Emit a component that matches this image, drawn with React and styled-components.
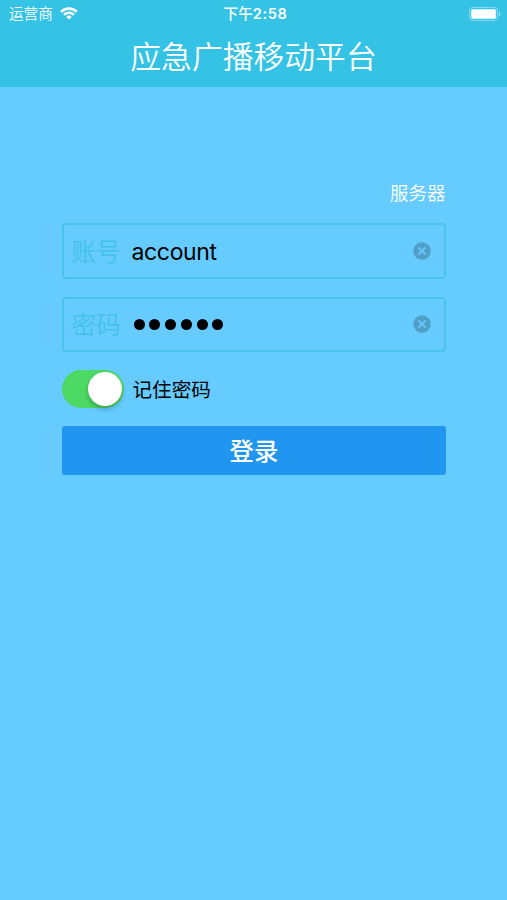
import React, { useState } from 'react';
import styled, { createGlobalStyle } from 'styled-components';

const GlobalStyle = createGlobalStyle`
  body {
    margin: 0;
    background: #66cbff;
    font-family: Inter, "Noto Sans CJK SC", sans-serif;
  }
  * {
    box-sizing: border-box;
  }
`;

const Screen = styled.div`
  min-height: 900px;
  background: #66cbff;
`;

const Header = styled.header`
  height: 86.5px;
  background: #34c2e5;
  color: #fff;
`;

const StatusBar = styled.div`
  display: grid;
  grid-template-columns: 1fr auto 1fr;
  align-items: center;
  height: 27px;
  padding: 0 6px 0 9px;
  font-size: 14.6px;
  line-height: 20px;
`;

const Carrier = styled.div`
  display: flex;
  align-items: center;
  gap: 7px;
  font-weight: 350;
`;

const Clock = styled.div`
  display: flex;
  align-items: center;
  padding-left: 1px;
  font-weight: 500;
  font-size: 14.6px;
`;

const Digits = styled.span`
  font-weight: 600;
  letter-spacing: 0.6px;
`;

const BatteryIcon = styled.svg`
  display: block;
  justify-self: end;
`;

const Title = styled.h1`
  margin: 0;
  text-align: center;
  font-size: 30.8px;
  font-weight: 350;
  line-height: 59px;
`;

const Form = styled.form`
  display: flex;
  flex-direction: column;
  width: 384px;
  margin: 0 auto;
  padding-top: 93.5px;
`;

const ServerLink = styled.a`
  align-self: flex-end;
  height: 43px;
  color: #fff;
  font-size: 18.5px;
  font-weight: 350;
  line-height: 26px;
`;

const Field = styled.div`
  display: flex;
  align-items: center;
  height: 55.5px;
  margin-bottom: 18px;
  padding: 0 13px 0 8px;
  border: 2px solid #48c3ec;
  border-radius: 4px;
`;

const FieldName = styled.span`
  width: 60px;
  padding-top: 2px;
  color: #40c2e9;
  font-size: 24.6px;
  font-weight: 350;
  line-height: 34px;
`;

const FieldValue = styled.span`
  flex: 1;
  padding-top: 2px;
  color: #000;
  font-size: 23px;
  letter-spacing: -0.35px;
  line-height: 34px;
`;

const Dots = styled.span`
  display: flex;
  flex: 1;
  gap: 4.8px;
  padding-left: 2px;
`;

const Dot = styled.i`
  width: 11px;
  height: 11px;
  border-radius: 50%;
  background: #000;
`;

const ClearButton = styled.button`
  display: flex;
  padding: 0;
  border: 0;
  background: none;
`;

const RememberRow = styled.div`
  display: flex;
  align-items: center;
  height: 38px;
  margin-bottom: 18px;
  color: #000;
  font-size: 19.6px;
  line-height: 28px;
`;

const RememberText = styled.span`
  padding: 2px 0 0 9px;
`;

const Switch = styled.button`
  display: flex;
  align-items: center;
  justify-content: ${({ $on }) => ($on ? 'flex-end' : 'flex-start')};
  width: 62px;
  height: 38px;
  padding: 0 1.5px;
  border: 0;
  border-radius: 19px;
  background: ${({ $on }) => ($on ? '#4cd964' : '#e5e5e5')};
`;

const Thumb = styled.span`
  width: 34px;
  height: 34px;
  border-radius: 50%;
  background: #fff;
  box-shadow: 0 3px 5px rgba(0, 0, 0, 0.25);
`;

const LoginButton = styled.button`
  height: 49px;
  padding: 2px 0 0 1px;
  border: 0;
  border-radius: 3px;
  background: #2196f0;
  color: #fff;
  font-family: inherit;
  font-size: 24.4px;
  font-weight: 500;
  line-height: 47px;
`;

const Wifi = () => (
  <svg width="18" height="13" viewBox="0 0 18 13" fill="none" stroke="#fff" strokeWidth="2.5">
    <path d="M1.1 4.8a11.2 11.2 0 0 1 15.8 0" />
    <path d="M4 7.9a7.1 7.1 0 0 1 10 0" />
    <path d="M9 12.6 6.3 9.9a3.8 3.8 0 0 1 5.4 0z" fill="#fff" stroke="none" />
  </svg>
);

const Battery = () => (
  <BatteryIcon width="32" height="14" viewBox="0 0 32 14">
    <rect x="0.5" y="0.5" width="28" height="13" rx="3" fill="none" stroke="#fff" strokeOpacity="0.4" />
    <rect x="2.2" y="2.2" width="24.6" height="9.6" rx="1.2" fill="#fff" />
    <path d="M30 4.6v4.8a2.6 2.6 0 0 0 0-4.8z" fill="#fff" fillOpacity="0.5" />
  </BatteryIcon>
);

const Clear = ({ onClick }) => (
  <ClearButton type="button" onClick={onClick}>
    <svg width="18" height="18" viewBox="0 0 18 18">
      <circle cx="9" cy="9" r="8.7" fill="#509fc9" />
      <path d="M5.3 5.3l7.4 7.4M12.7 5.3l-7.4 7.4" stroke="#67c8fa" strokeWidth="1.7" />
    </svg>
  </ClearButton>
);

const App = () => {
  const [account, setAccount] = useState('account');
  const [passwordLength, setPasswordLength] = useState(6);
  const [remember, setRemember] = useState(true);

  return (
    <Screen>
      <GlobalStyle />
      <Header>
        <StatusBar>
          <Carrier>
            运营商
            <Wifi />
          </Carrier>
          <Clock>
            下午<Digits>2:58</Digits>
          </Clock>
          <Battery />
        </StatusBar>
        <Title>应急广播移动平台</Title>
      </Header>
      <Form onSubmit={(event) => event.preventDefault()}>
        <ServerLink>服务器</ServerLink>
        <Field>
          <FieldName>账号</FieldName>
          <FieldValue>{account}</FieldValue>
          <Clear onClick={() => setAccount('')} />
        </Field>
        <Field>
          <FieldName>密码</FieldName>
          <Dots>
            {Array.from({ length: passwordLength }, (_, index) => <Dot key={index} />)}
          </Dots>
          <Clear onClick={() => setPasswordLength(0)} />
        </Field>
        <RememberRow>
          <Switch type="button" $on={remember} onClick={() => setRemember(!remember)}>
            <Thumb />
          </Switch>
          <RememberText>记住密码</RememberText>
        </RememberRow>
        <LoginButton type="submit">登录</LoginButton>
      </Form>
    </Screen>
  );
};

export default App;
